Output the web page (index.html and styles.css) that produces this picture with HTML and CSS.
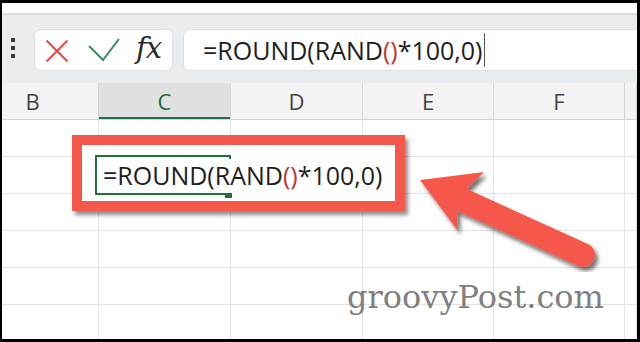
FILE: index.html
```html
<!DOCTYPE html>
<html>
<head>
<meta charset="utf-8">
<link rel="stylesheet" href="styles.css">
</head>
<body>
<div class="screen">
  <div class="topbar"></div>
  <div class="formula-row">
    <div class="grip"><span></span><span></span><span></span></div>
    <div class="fxbox">
      <svg class="ico-x" width="24" height="24" viewBox="0 0 24 24"><path d="M1.5 1.5 L22.5 22.5 M22.5 1.5 L1.5 22.5" stroke="#e8493d" stroke-width="2" fill="none"/></svg>
      <svg class="ico-check" width="32" height="24" viewBox="0 0 32 24"><path d="M1 8 L15 22 L31 1" stroke="#3b8c5d" stroke-width="2" fill="none"/></svg>
      <span class="fx">fx</span>
    </div>
    <div class="input">
      <span class="ftext">=ROUND(RAND<span class="red">()</span>*100,0)</span><span class="caret"></span>
    </div>
  </div>
  <div class="colheads">
    <div class="ch">B</div>
    <div class="ch sel">C</div>
    <div class="ch">D</div>
    <div class="ch">E</div>
    <div class="ch">F</div>
    <div class="ch"></div>
  </div>
  <div class="grid">
    <div class="row"><div></div><div></div><div></div><div></div><div></div><div></div></div>
    <div class="row"><div></div><div></div><div></div><div></div><div></div><div></div></div>
    <div class="row"><div></div><div></div><div></div><div></div><div></div><div></div></div>
    <div class="row"><div></div><div></div><div></div><div></div><div></div><div></div></div>
    <div class="row"><div></div><div></div><div></div><div></div><div></div><div></div></div>
    <div class="row"><div></div><div></div><div></div><div></div><div></div><div></div></div>
  </div>

  <div class="watermark">groovyPost.com</div>

  <div class="callout">
    <div class="cell">
      <span class="ctext">=ROUND(RAND<span class="red">()</span>*100,0)</span>
      <span class="tick"></span>
      <span class="handle"></span>
    </div>
  </div>

  <svg class="arrow" width="640" height="342" viewBox="0 0 640 342">
    <defs>
      <filter id="sh" x="-20%" y="-20%" width="140%" height="140%">
        <feGaussianBlur in="SourceAlpha" stdDeviation="2"/>
        <feOffset dx="3" dy="4" result="b"/>
        <feComponentTransfer><feFuncA type="linear" slope="0.55"/></feComponentTransfer>
        <feMerge><feMergeNode/><feMergeNode in="SourceGraphic"/></feMerge>
      </filter>
    </defs>
    <g filter="url(#sh)" fill="#f5594b">
      <path d="M462 200 L583 255" stroke="#f5594b" stroke-width="24" stroke-linecap="round"/>
      <polygon points="420,180 484,172 467,189 457,211 458,231"/>
    </g>
  </svg>
</div>
</body>
</html>
```
FILE: styles.css
```css
* { box-sizing: border-box; }
html, body { margin: 0; padding: 0; }
body {
  background: #000;
  width: 640px;
  height: 342px;
  overflow: hidden;
  font-family: "Open Sans", "Noto Sans", sans-serif;
}
.screen {
  position: relative;
  margin: 3px 3px 3px 2px;
  width: 635px;
  height: 336px;
  background: #fff;
  overflow: hidden;
}
.topbar {
  height: 12px;
  background: #fff;
  border-bottom: 2px solid #d9dadc;
}
.formula-row {
  height: 68px;
  background: #eaedf0;
  display: flex;
  align-items: flex-start;
  padding-top: 14px;
}
.grip {
  width: 32px;
  padding-left: 9px;
  padding-top: 9px;
  display: flex;
  flex-direction: column;
  gap: 4px;
}
.grip span {
  display: block;
  width: 4px;
  height: 4px;
  background: #3a3a3a;
}
.fxbox {
  width: 139px;
  height: 42px;
  background: #fff;
  border: 1px solid #dcdee1;
  border-radius: 7px;
  display: flex;
  align-items: center;
  padding-left: 10px;
}
.ico-x { margin-right: 19px; margin-top: 1px; }
.ico-check { margin-right: 16px; margin-top: 0px; }
.fx {
  font-family: "DejaVu Serif", serif;
  font-style: italic;
  font-size: 29px;
  color: #2a2a2a;
  line-height: 1;
  margin-top: -3px;
  letter-spacing: -1px;
}
.input {
  flex: 1;
  margin-left: 10px;
  margin-right: -10px;
  height: 42px;
  background: #fff;
  border: 1px solid #dcdee1;
  border-radius: 7px;
  display: flex;
  align-items: center;
  padding-left: 19px;
}
.ftext, .ctext {
  font-size: 25px;
  color: #1e1e1e;
  white-space: nowrap;
  line-height: 1;
}
.red { color: #c0392f; }
.caret {
  display: block;
  width: 1px;
  height: 34px;
  background: #555;
  margin-left: 2px;
}
.colheads {
  display: grid;
  grid-template-columns: 132px 132px 132px 131px 131px 1fr;
  margin-left: -35px;
  height: 37px;
  background: #f3f3f3;
  border-bottom: 1px solid #d4d4d4;
}
.ch {
  border-right: 1px solid #d6d6d6;
  font-size: 22px;
  color: #444;
  text-align: center;
  line-height: 36px;
}
.ch.sel {
  background: #e1e1e1;
  color: #1d6b41;
  box-shadow: inset 0 -2px 0 #1f7145;
}
.grid { margin-left: -35px; }
.row {
  display: grid;
  grid-template-columns: 132px 132px 132px 131px 131px 1fr;
  height: 37px;
  border-bottom: 1px solid #e3e3e3;
}
.row div { border-right: 1px solid #e3e3e3; }
.callout {
  position: absolute;
  left: 70px;
  top: 132px;
  width: 333px;
  height: 76px;
  border: 10px solid #f5594b;
  background: #fff;
  box-shadow: 3px 4px 4px rgba(0,0,0,0.45);
}
.cell {
  position: absolute;
  left: 13px;
  top: 10px;
  width: 136px;
  height: 40px;
  border-left: 2px solid #1f7145;
  border-top: 2px solid #1f7145;
  display: flex;
  align-items: center;
  padding-left: 6px;
  padding-bottom: 2px;
}
.cell::after {
  content: "";
  position: absolute;
  left: -2px;
  bottom: 0;
  width: 130px;
  height: 2px;
  background: #1f7145;
}
.ctext { position: relative; z-index: 1; }
.tick {
  position: absolute;
  right: 0;
  top: 0;
  width: 2px;
  height: 2px;
  background: #1f7145;
}
.handle {
  position: absolute;
  right: -1px;
  bottom: -3px;
  width: 7px;
  height: 5px;
  background: #1f7145;
}
.arrow {
  position: absolute;
  left: -2px;
  top: -3px;
}
.watermark {
  position: absolute;
  left: 345px;
  top: 274px;
  font-family: "DejaVu Serif", serif;
  font-size: 32px;
  color: #808080;
  line-height: 40px;
  white-space: nowrap;
}
```
